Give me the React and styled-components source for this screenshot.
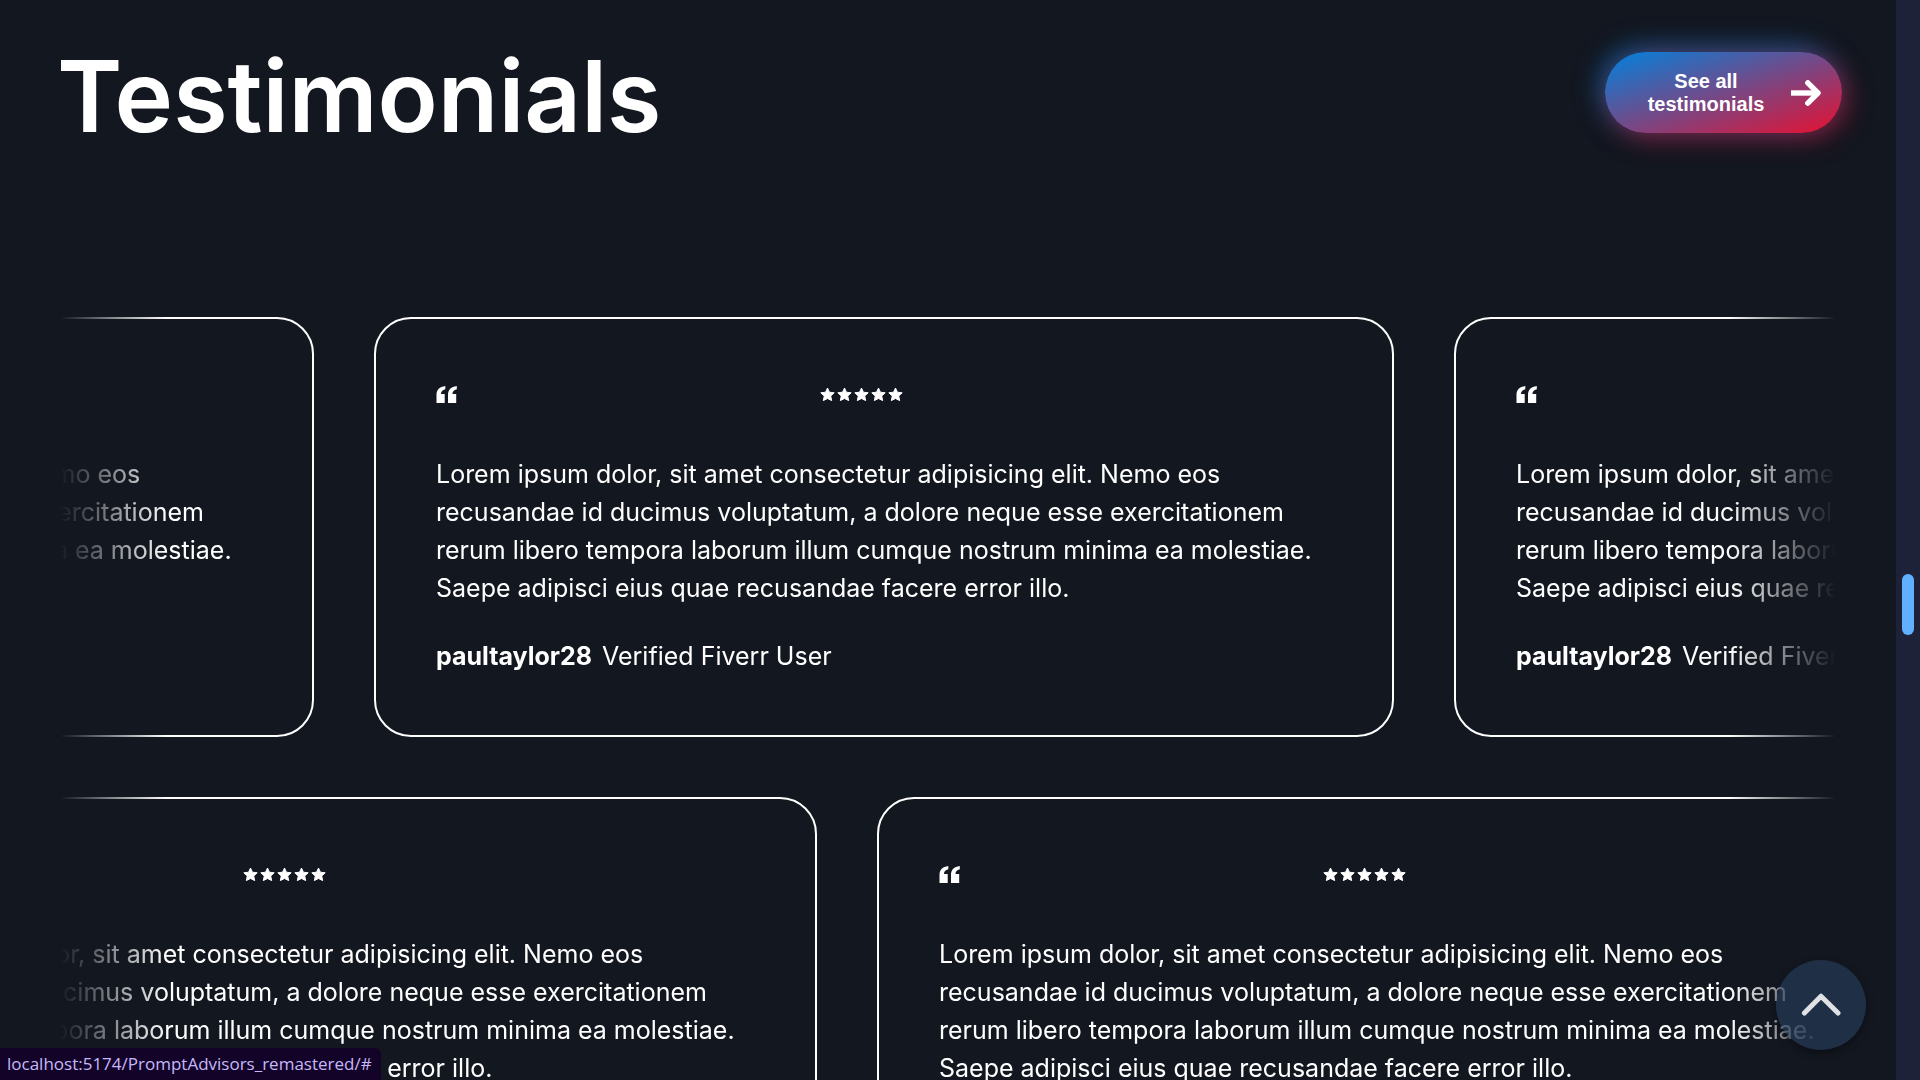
import React from "react";
import styled, { createGlobalStyle } from "styled-components";

const GlobalStyle = createGlobalStyle`
  *, *::before, *::after { box-sizing: border-box; }
  body {
    margin: 0;
    background: #131720;
    color: #fff;
    font-family: Inter, "Liberation Sans", sans-serif;
  }
  h2, p { margin: 0; }
`;

const Shell = styled.div`
  display: grid;
  grid-template-columns: minmax(0, 1fr) 24px;
  height: 100vh;
  overflow: hidden;
`;

const Section = styled.main`
  min-height: 0;
  overflow: hidden;
  padding-top: 41px;
`;

const Header = styled.header`
  display: flex;
  justify-content: space-between;
  align-items: flex-start;
  padding: 0 54px 0 57px;
`;

const Title = styled.h2`
  font-size: 99px;
  font-weight: 600;
  line-height: 110px;
`;

const AllButton = styled.button`
  display: flex;
  align-items: center;
  gap: 20px;
  width: 237px;
  height: 81px;
  margin-top: 11px;
  padding: 0 21px 0 36px;
  border: 0;
  border-radius: 41px;
  background: linear-gradient(to bottom right, #0082de, #e81030);
  box-shadow:
    5px 5px 26px rgba(232, 16, 48, 0.5),
    -5px -5px 26px rgba(0, 130, 222, 0.6);
  color: #fff;
  font: bold 20px/23px "Liberation Sans", Arial, sans-serif;
  cursor: pointer;
`;

const ButtonLabel = styled.span`
  flex: 1;
  text-align: center;
`;

const Marquee = styled.div`
  display: flex;
  flex-direction: column;
  gap: 60px;
  margin: 166px 60px 0;
  overflow: hidden;
  mask-image: linear-gradient(to right, transparent, #000 6%, #000 94%, transparent);
`;

const Row = styled.div`
  display: flex;
  gap: 60px;
  transform: translateX(${(p) => -p.$scrolled}px);
`;

const Card = styled.article`
  flex: 0 0 1020px;
  padding: 60px;
  border: 2px solid #fff;
  border-radius: 37px;
`;

const CardTop = styled.div`
  display: grid;
  grid-template-columns: 3fr 4fr;
  align-items: center;
  height: 30px;
  margin-bottom: 46px;
`;

const Stars = styled.div`
  display: flex;
  gap: 1px;
`;

const Quote = styled.p`
  font-size: 25px;
  line-height: 38px;
`;

const Author = styled.p`
  display: flex;
  gap: 10px;
  margin-top: 30px;
  font-size: 25px;
  line-height: 38px;
`;

const Name = styled.strong`
  font-weight: 700;
`;

const ScrollTrack = styled.div`
  display: flex;
  flex-direction: column;
  align-items: center;
  background: #1e2238;
  &::before { content: ""; flex: 574; }
  &::after { content: ""; flex: 445; }
`;

const ScrollThumb = styled.div`
  flex: 61;
  width: 12px;
  border-radius: 6px;
  background: #61afff;
`;

const TopButton = styled.button`
  position: fixed;
  right: 54px;
  bottom: 30px;
  display: grid;
  place-items: center;
  width: 90px;
  height: 90px;
  padding: 0;
  border: 0;
  border-radius: 50%;
  background: rgba(43, 68, 102, 0.54);
  box-shadow: 0 3px 8px rgba(0, 0, 0, 0.4);
  cursor: pointer;
`;

const StatusBar = styled.div`
  position: fixed;
  left: 0;
  bottom: 0;
  height: 32px;
  padding: 0 9px 0 7px;
  border-top-right-radius: 6px;
  background: #130328;
  color: #c6b9fb;
  font: 17px/32px "Open Sans", "Noto Sans", sans-serif;
`;

const ArrowIcon = () => (
  <svg width="30" height="26" viewBox="0 0 30 26" fill="none" stroke="#fff" strokeWidth="5.4" aria-hidden="true">
    <path d="M0 13H25" />
    <path d="M16.8 2.8L27 13L16.8 23.2" strokeLinecap="round" strokeLinejoin="round" />
  </svg>
);

const QuoteIcon = () => (
  <svg width="21" height="17" viewBox="0 0 21 17" fill="#fff" aria-hidden="true">
    <path d="M0.5 17V8.5C0.5 4 3.5 0.8 9.3 0V3.2C6.4 4 5 5.4 5 8H8.7V17Z" />
    <path d="M12 17V8.5C12 4 15 0.8 20.8 0V3.2C17.9 4 16.5 5.4 16.5 8H20.2V17Z" />
  </svg>
);

const StarIcon = () => (
  <svg width="16" height="15" viewBox="0 0 16 15" fill="#fff" stroke="#fff" strokeWidth="1" strokeLinejoin="round" aria-hidden="true">
    <path d="M7.5 1L9.4 5.2L14.2 5.8L10.7 9L11.7 13.6L7.5 11.5L3.3 13.6L4.3 9L0.8 5.8L5.6 5.2Z" />
  </svg>
);

const ChevronIcon = () => (
  <svg width="40" height="24" viewBox="0 0 40 24" fill="none" stroke="#e0e1e3" strokeWidth="5" strokeLinecap="round" strokeLinejoin="round" aria-hidden="true">
    <path d="M3.4 20L20 3.2L37 20" />
  </svg>
);

const Testimonial = () => (
  <Card>
    <CardTop>
      <QuoteIcon />
      <Stars role="img" aria-label="5 stars">
        {[1, 2, 3, 4, 5].map((n) => (
          <StarIcon key={n} />
        ))}
      </Stars>
    </CardTop>
    <Quote>
      Lorem ipsum dolor, sit amet consectetur adipisicing elit. Nemo eos recusandae id ducimus
      voluptatum, a dolore neque esse exercitationem rerum libero tempora laborum illum cumque
      nostrum minima ea molestiae. Saepe adipisci eius quae recusandae facere error illo.
    </Quote>
    <Author>
      <Name>paultaylor28</Name>
      <span>Verified Fiverr User</span>
    </Author>
  </Card>
);

const rows = [
  { id: "upper", scrolled: 766, cards: 3 },
  { id: "lower", scrolled: 263, cards: 2 },
];

export default function App() {
  return (
    <>
      <GlobalStyle />
      <Shell>
        <Section>
          <Header>
            <Title>Testimonials</Title>
            <AllButton type="button">
              <ButtonLabel>See all testimonials</ButtonLabel>
              <ArrowIcon />
            </AllButton>
          </Header>
          <Marquee>
            {rows.map((row) => (
              <Row key={row.id} $scrolled={row.scrolled}>
                {Array.from({ length: row.cards }, (_, i) => (
                  <Testimonial key={i} />
                ))}
              </Row>
            ))}
          </Marquee>
        </Section>
        <ScrollTrack>
          <ScrollThumb />
        </ScrollTrack>
      </Shell>
      <TopButton type="button" aria-label="Back to top">
        <ChevronIcon />
      </TopButton>
      <StatusBar>localhost:5174/PromptAdvisors_remastered/#</StatusBar>
    </>
  );
}
